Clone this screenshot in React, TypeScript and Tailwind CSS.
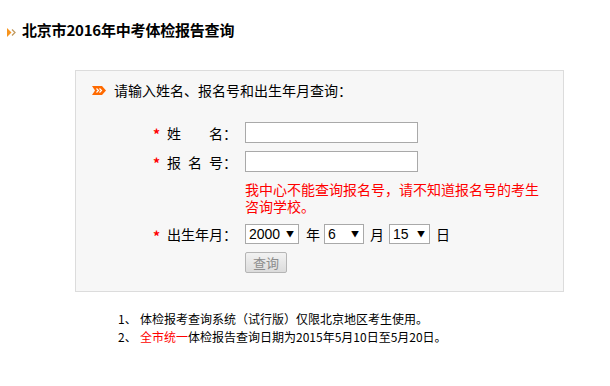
import React from "react";

const FONT = '"Noto Sans CJK SC", "Noto Sans", sans-serif';

function Sel({ value, w }: { value: string; w: string }) {
  return (
    <div
      className={`${w} h-[20px] border border-[#a9a9a9] bg-white flex items-center justify-between pl-[3px] pr-[4px]`}
    >
      <span className="text-[14px] leading-[18px] text-[#000] font-['Liberation_Sans',sans-serif]">{value}</span>
      <span className="text-[8px] leading-[8px] text-black">▼</span>
    </div>
  );
}

function Label({ chars }: { chars: string[] }) {
  return (
    <div className="flex items-center w-[92px] shrink-0">
      <span className="w-[14px] text-[#ff0000] text-[14px] leading-[14px] pt-[3px] font-bold">*</span>
      <span className="flex justify-between w-[56px]">
        {chars.map((c, i) => (
          <span key={i}>{c}</span>
        ))}
      </span>
      <span className="w-[14px]">：</span>
    </div>
  );
}

export default function App() {
  return (
    <div
      className="w-[610px] h-[386px] bg-white text-black overflow-hidden"
      style={{ fontFamily: FONT }}
    >
      {/* Title */}
      <div className="flex items-start pt-[22px] pl-[7px]">
        <svg width="9" height="9" viewBox="0 0 9 9" className="mt-[6px]">
          <polygon points="0,0 4.5,4.5 0,9" fill="#f7941d" />
          <polyline points="5,1.5 8,4.5 5,7.5" fill="none" stroke="#c29a5e" strokeWidth="1.3" />
        </svg>
        <div className="ml-[6px] text-[15px] leading-[16px] font-bold text-[#000] tracking-[-0.2px]">北京市2016年中考体检报告查询</div>
      </div>

      {/* Box */}
      <div className="mt-[32px] ml-[75px] w-[489px] h-[222px] border border-[#dcdcdc] bg-[#f7f7f7]">
        <div className="flex items-center pt-[9px] pl-[16px] h-[29px]">
          <svg width="14" height="9" viewBox="0 0 14 9">
            <polygon points="0,0 10,0 14,4.5 10,9 0,9 3,4.5" fill="#ff6a00" />
            <polyline points="4.5,2.5 6.5,4.5 4.5,6.5" fill="none" stroke="#fff" strokeWidth="1.2" />
            <polyline points="7.5,2.5 9.5,4.5 7.5,6.5" fill="none" stroke="#fff" strokeWidth="1.2" />
          </svg>
          <div className="ml-[8px] text-[14px] leading-[20px]">请输入姓名、报名号和出生年月查询：</div>
        </div>

        <div className="pl-[77px] text-[14px] leading-[20px]">
          <div className="mt-[22px] flex items-center h-[21px]">
            <Label chars={["姓", "名"]} />
            <div className="w-[173px] h-[21px] border border-[#a9a9a9] bg-white" />
          </div>
          <div className="mt-[8px] flex items-center h-[21px]">
            <Label chars={["报", "名", "号"]} />
            <div className="w-[173px] h-[21px] border border-[#a9a9a9] bg-white" />
          </div>
          <div className="mt-[9px] ml-[92px] text-[#ff0000] leading-[17px] w-[300px]">
            我中心不能查询报名号，请不知道报名号的考生咨询学校。
          </div>
          <div className="mt-[9px] flex items-center h-[20px]">
            <Label chars={["出", "生", "年", "月"]} />
            <Sel value="2000" w="w-[54px]" />
            <span className="ml-[7px] mr-[4px]">年</span>
            <Sel value="6" w="w-[40px]" />
            <span className="ml-[6px] mr-[5px]">月</span>
            <Sel value="15" w="w-[41px]" />
            <span className="ml-[6px]">日</span>
          </div>
          <div className="mt-[8px] ml-[92px]">
            <div className="w-[42px] h-[21px] border border-[#b5b5b5] rounded-[2px] bg-gradient-to-b from-[#f2f2f2] to-[#dcdcdc] flex items-center justify-center text-[13px] leading-[16px] text-[#8c8c8c]">
              查询
            </div>
          </div>
        </div>
      </div>

      {/* Notes */}
      <div className="mt-[18px] pl-[118px] text-[12px] leading-[18px]">
        <div className="flex">
          <span className="w-[22px] shrink-0">1、</span>
          <span>体检报考查询系统（试行版）仅限北京地区考生使用。</span>
        </div>
        <div className="flex">
          <span className="w-[22px] shrink-0">2、</span>
          <span>
            <span className="text-[#ff0000]">全市统一</span>体检报告查询日期为2015年5月10日至5月20日。
          </span>
        </div>
      </div>
    </div>
  );
}
